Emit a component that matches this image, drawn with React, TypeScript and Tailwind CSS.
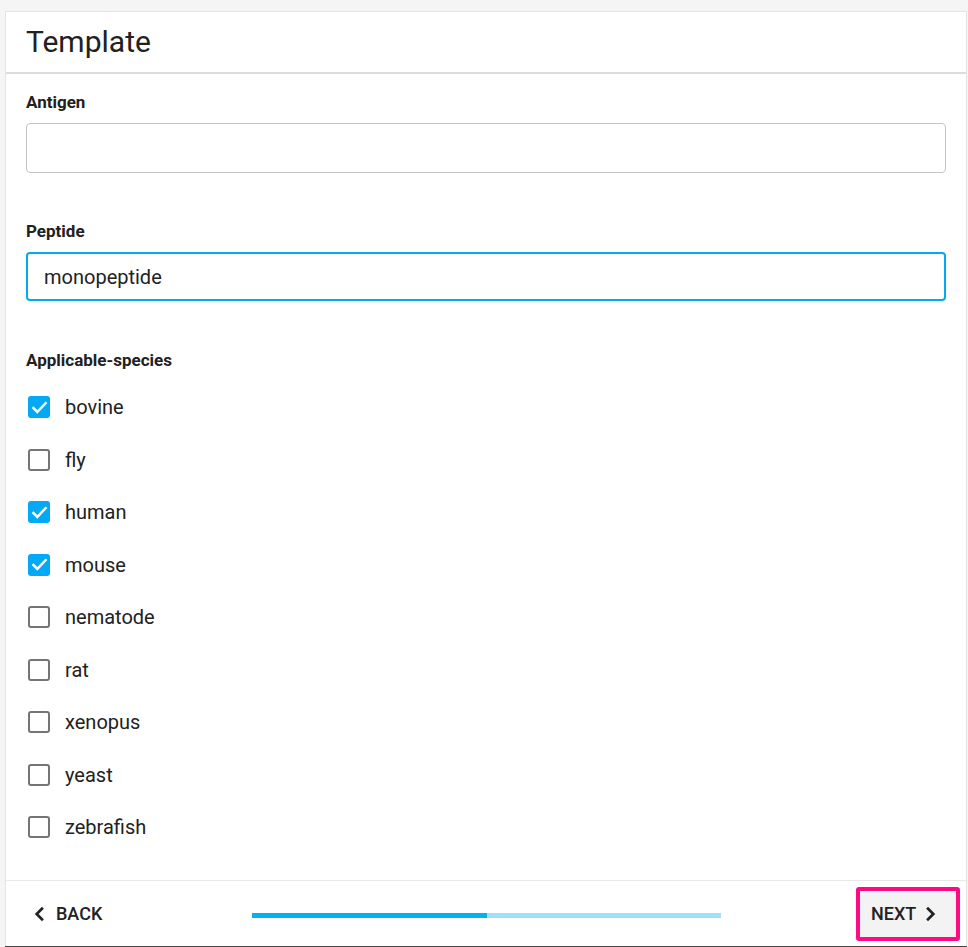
import { useState } from 'react'

const species = ['bovine', 'fly', 'human', 'mouse', 'nematode', 'rat', 'xenopus', 'yeast', 'zebrafish']

function CheckIcon() {
  return (
    <svg viewBox="0 0 24 24" className="size-[21px]" fill="none" stroke="white" strokeWidth={2.8} strokeLinecap="square">
      <path d="M5 12.5l4.5 4.5L19 7" />
    </svg>
  )
}

function Chevron({ dir }: { dir: 'left' | 'right' }) {
  return (
    <svg viewBox="0 0 24 24" className="size-[20px]" fill="none" stroke="#222" strokeWidth={3.2}>
      <path d={dir === 'left' ? 'M15.5 4.5l-7.5 7.5 7.5 7.5' : 'M8.5 4.5l7.5 7.5-7.5 7.5'} />
    </svg>
  )
}

export default function App() {
  const [checked, setChecked] = useState<Record<string, boolean>>({ bovine: true, human: true, mouse: true })
  const [peptide, setPeptide] = useState('monopeptide')
  const [antigen, setAntigen] = useState('')

  return (
    <div className="h-[947px] bg-[#f5f5f5] pt-[11px] pl-[5px] pr-[1px] flex flex-col font-['Roboto',sans-serif] text-[#212121]">
      <div className="flex-1 flex flex-col bg-white border border-b-0 border-[#e4e4e4]">
        {/* Header */}
        <div className="h-[62px] flex items-center px-[20px] border-b-2 border-[#dcdcdc]">
          <h1 className="text-[30px] leading-none">Template</h1>
        </div>

        {/* Body */}
        <div className="flex-1 flex flex-col px-[20px] pt-[18px]">
          <label className="text-[17px] font-bold leading-[20px]">Antigen</label>
          <input
            className="mt-[11px] h-[50px] rounded-[4px] border border-[#c4c4c4] px-[17px] text-[20px] outline-none"
            value={antigen}
            onChange={e => setAntigen(e.target.value)}
          />

          <label className="mt-[48px] text-[17px] font-bold leading-[20px]">Peptide</label>
          <input
            className="mt-[11px] h-[49px] rounded-[4px] border-2 border-[#03a9f4] px-[16px] text-[20px] text-[#222] outline-none"
            value={peptide}
            onChange={e => setPeptide(e.target.value)}
          />

          <label className="mt-[49px] text-[17px] font-bold leading-[20px]">Applicable-species</label>
          <div className="mt-[11px] flex flex-col">
            {species.map(s => (
              <button
                key={s}
                onClick={() => setChecked(c => ({ ...c, [s]: !c[s] }))}
                className="h-[52.5px] flex items-center gap-[15px] pl-[2px] text-left"
              >
                {checked[s] ? (
                  <span className="size-[22px] rounded-[3px] bg-[#03a9f4] flex items-center justify-center">
                    <CheckIcon />
                  </span>
                ) : (
                  <span className="size-[22px] rounded-[3px] border-[2.5px] border-[#757575]" />
                )}
                <span className="text-[20px] text-[#222]">{s}</span>
              </button>
            ))}
          </div>
        </div>

        {/* Footer */}
        <div className="h-[66px] border-t border-[#e8e8e8] flex items-center pl-[24px] pr-[6px]">
          <button className="flex items-center gap-[6px] text-[18px] font-medium text-[#222] w-[222px]">
            <Chevron dir="left" />
            BACK
          </button>
          <div className="flex-1 flex justify-start">
            <div className="w-[469px] h-[5px] flex mt-[3px]">
              <div className="w-[235px] bg-[#03b0f0]" />
              <div className="flex-1 bg-[#a0e0f8]" />
            </div>
          </div>
          <button className="h-[54px] w-[104px] rounded-[3px] border-4 border-[#ff0a84] bg-[#f3f3f3] flex items-center pl-[11px] gap-[4px] text-[18px] font-medium text-[#222]">
            NEXT
            <Chevron dir="right" />
          </button>
        </div>
      </div>
      <div className="h-px bg-[#444]" />
    </div>
  )
}
